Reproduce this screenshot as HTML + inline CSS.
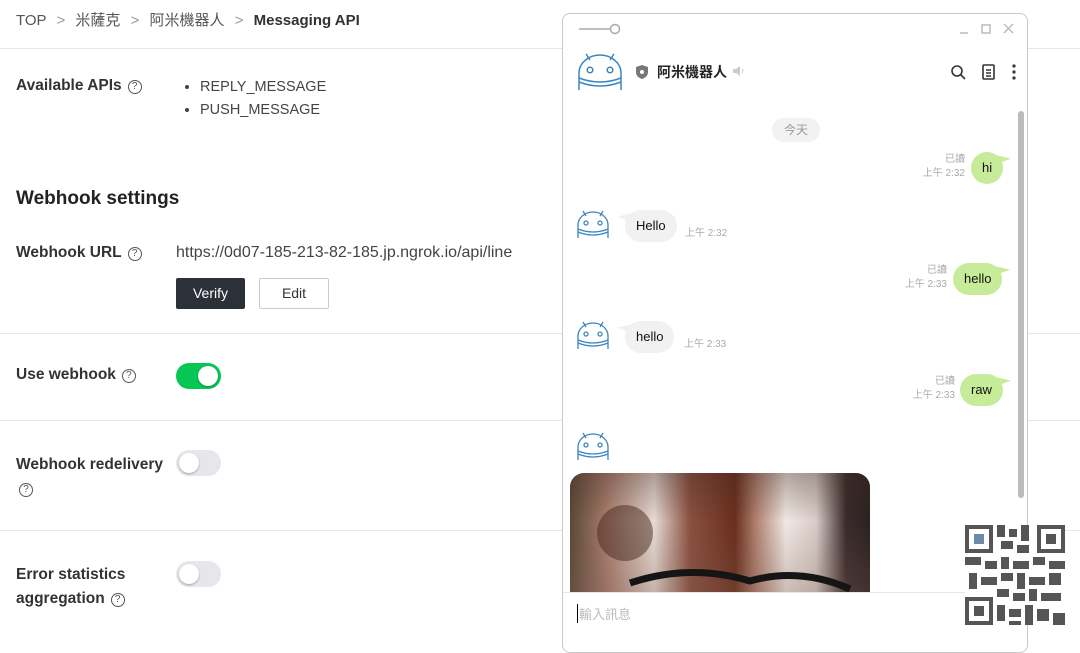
<!DOCTYPE html>
<html><head><meta charset="utf-8"><style>
*{box-sizing:border-box;margin:0;padding:0}
body{width:1080px;height:640px;overflow:hidden;background:#fff;font-family:"Liberation Sans","Noto Sans CJK TC",sans-serif;color:#111;position:relative}
.a{position:absolute}
.hr{position:absolute;left:0;width:1080px;height:1px;background:#e6e6e6}
.lbl{font-size:15.5px;font-weight:bold;color:#333}
.q{display:inline-block;width:14px;height:14px;border:1.3px solid #555;border-radius:50%;font-size:10px;text-align:center;line-height:12px;font-weight:normal;color:#555;vertical-align:1px;margin-left:6px}
.tog{position:absolute;width:45px;height:26px;border-radius:13px;background:#e5e7ea}
.tog i{position:absolute;top:3px;left:3px;width:20px;height:20px;border-radius:50%;background:#fff;box-shadow:0 1px 2px rgba(0,0,0,.3)}
.tog.on{background:#06c755}.tog.on i{left:22px}
.win{position:absolute;left:562px;top:13px;width:466px;height:640px;border:1px solid #c8c8c8;border-radius:8px;background:#fff;overflow:hidden}
.bub{position:absolute;height:32px;border-radius:16px;font-size:13px;line-height:32px;padding:0 11px;color:#111}
.me{background:#c6ec9a}.bot{background:#f1f1f1}
.me:after{content:"";position:absolute;right:-7px;top:1px;border-left:12px solid #c6ec9a;border-top:8px solid transparent;transform:rotate(-20deg)}
.bot:before{content:"";position:absolute;left:-7px;top:1px;border-right:12px solid #f1f1f1;border-top:8px solid transparent;transform:rotate(20deg)}
.t{position:absolute;font-size:10px;color:#aaa;text-align:right;line-height:14px}
</style></head><body>
<div class="a" style="left:16px;top:9px;font-size:15px;color:#555">TOP <span style="color:#999;margin:0 6px">&gt;</span> 米薩克 <span style="color:#999;margin:0 6px">&gt;</span> 阿米機器人 <span style="color:#999;margin:0 6px">&gt;</span> <b style="color:#333">Messaging API</b></div>
<div class="hr" style="top:48px"></div>
<div class="a lbl" style="left:16px;top:77px">Available APIs<span class="q">?</span></div>
<ul class="a" style="left:200px;top:76px;font-size:14.5px;color:#444;line-height:23px;padding-left:0">
<li style="margin-left:0">REPLY_MESSAGE</li><li>PUSH_MESSAGE</li></ul>
<div class="a" style="left:16px;top:188px;font-size:19px;font-weight:bold;color:#222">Webhook settings</div>
<div class="a lbl" style="left:16px;top:244px">Webhook URL<span class="q">?</span></div>
<div class="a" style="left:176px;top:244px;font-size:16px;color:#444">https://0d07-185-213-82-185.jp.ngrok.io/api/line</div>
<div class="a" style="left:176px;top:278px;width:69px;height:31px;background:#2c3038;color:#fff;font-size:14px;text-align:center;line-height:31px;border-radius:2px">Verify</div>
<div class="a" style="left:259px;top:278px;width:70px;height:31px;border:1px solid #ccc;color:#333;font-size:14px;text-align:center;line-height:29px;border-radius:2px">Edit</div>
<div class="hr" style="top:333px"></div>
<div class="a lbl" style="left:16px;top:366px">Use webhook<span class="q">?</span></div>
<div class="tog on" style="left:176px;top:363px"><i></i></div>
<div class="hr" style="top:420px"></div>
<div class="a lbl" style="left:16px;top:453px;line-height:24px">Webhook redelivery<br><span class="q" style="margin-left:3px">?</span></div>
<div class="tog" style="left:176px;top:450px"><i></i></div>
<div class="hr" style="top:530px"></div>
<div class="a lbl" style="left:16px;top:563px;line-height:24px">Error statistics<br>aggregation<span class="q">?</span></div>
<div class="tog" style="left:176px;top:561px"><i></i></div>

<div class="win">
<svg class="a" style="left:15px;top:8px" width="44" height="14"><line x1="1" y1="7" x2="32" y2="7" stroke="#aaa" stroke-width="1.5"/><circle cx="37" cy="7" r="4.5" fill="#fff" stroke="#aaa" stroke-width="1.5"/></svg>
<svg class="a" style="left:395px;top:8px" width="65" height="14" stroke="#bbb" stroke-width="1.5" fill="none"><line x1="2" y1="11" x2="10" y2="11"/><rect x="24" y="3" width="8" height="8"/><path d="M46 2l9 9M55 2l-9 9"/></svg>
<svg class="a" style="left:14px;top:37px" width="46" height="40" fill="none" stroke="#3a86c0" stroke-width="1.5"><path d="M2 39V22A21 18 0 0 1 44 22v17"/><path d="M2 27q21 8 42 0M2 31q21 8 42 0"/><circle cx="13" cy="19" r="2.8"/><circle cx="33" cy="19" r="2.8"/><path d="M9 3l4 6M37 3l-4 6"/></svg>
<svg class="a" style="left:72px;top:50px" width="14" height="16"><path d="M7 1l6 2v5c0 4-3 6-6 7-3-1-6-3-6-7V3z" fill="#777"/><circle cx="7" cy="8" r="2" fill="#fff"/></svg>
<div class="a" style="left:94px;top:48px;font-size:14px;font-weight:bold;color:#222">阿米機器人</div>
<svg class="a" style="left:169px;top:51px" width="14" height="12"><path d="M1 4h3l4-3v10l-4-3H1z" fill="#ccc"/><path d="M10 4q2 2 0 4" stroke="#ccc" fill="none"/></svg>
<svg class="a" style="left:386px;top:49px" width="70" height="18" fill="none" stroke="#333" stroke-width="1.6"><circle cx="8" cy="8" r="5"/><path d="M12 12l4 4"/><rect x="34" y="2" width="11" height="14" rx="1"/><path d="M37 7h5M37 10h5M37 13h5"/><circle cx="65" cy="3" r=".8" fill="#333"/><circle cx="65" cy="9" r=".8" fill="#333"/><circle cx="65" cy="15" r=".8" fill="#333"/></svg>
<div class="a" style="left:455px;top:97px;width:6px;height:387px;border-radius:3px;background:#bbb"></div>
<div class="a" style="left:209px;top:104px;width:48px;height:24px;border-radius:12px;background:#f2f2f2;font-size:12px;color:#999;text-align:center;line-height:24px">今天</div>

<div class="t" style="left:340px;top:139px;width:62px">已讀<br>上午 2:32</div>
<div class="bub me" style="left:408px;top:138px">hi</div>
<svg class="a" style="left:13px;top:195px" width="34" height="30" fill="none" stroke="#3a86c0" stroke-width="1.3"><path d="M2 29V16A15 13 0 0 1 32 16v13"/><path d="M2 20q15 6 30 0M2 23q15 6 30 0"/><circle cx="10" cy="14" r="2"/><circle cx="24" cy="14" r="2"/><path d="M7 2l3 5M27 2l-3 5"/></svg>
<div class="bub bot" style="left:62px;top:196px">Hello</div>
<div class="t" style="left:122px;top:213px;text-align:left">上午 2:32</div>

<div class="t" style="left:320px;top:250px;width:64px">已讀<br>上午 2:33</div>
<div class="bub me" style="left:390px;top:249px">hello</div>
<svg class="a" style="left:13px;top:306px" width="34" height="30" fill="none" stroke="#3a86c0" stroke-width="1.3"><path d="M2 29V16A15 13 0 0 1 32 16v13"/><path d="M2 20q15 6 30 0M2 23q15 6 30 0"/><circle cx="10" cy="14" r="2"/><circle cx="24" cy="14" r="2"/><path d="M7 2l3 5M27 2l-3 5"/></svg>
<div class="bub bot" style="left:62px;top:307px">hello</div>
<div class="t" style="left:121px;top:324px;text-align:left">上午 2:33</div>

<div class="t" style="left:330px;top:361px;width:62px">已讀<br>上午 2:33</div>
<div class="bub me" style="left:397px;top:360px">raw</div>
<svg class="a" style="left:13px;top:417px" width="34" height="30" fill="none" stroke="#3a86c0" stroke-width="1.3"><path d="M2 29V16A15 13 0 0 1 32 16v13"/><path d="M2 20q15 6 30 0M2 23q15 6 30 0"/><circle cx="10" cy="14" r="2"/><circle cx="24" cy="14" r="2"/><path d="M7 2l3 5M27 2l-3 5"/></svg>

<div class="a" style="left:7px;top:459px;width:300px;height:120px;border-radius:14px 14px 0 0;overflow:hidden;background:linear-gradient(90deg,#5a4838 0%,#a87c6c 12%,#e8dcd6 28%,#8a5040 40%,#6a2e1c 55%,#b08070 62%,#f0e8e4 72%,#d8ccc8 82%,#3a2a2a 92%,#2a2222 100%)">
<div class="a" style="left:0;top:0;width:300px;height:120px;background:linear-gradient(180deg,rgba(60,40,30,.35),rgba(0,0,0,0) 40%,rgba(120,90,80,.3))"></div>
<svg class="a" style="left:0;top:0" width="300" height="120"><path d="M60 110q60-20 120-2q50-14 100 8" stroke="#151515" stroke-width="7" fill="none"/><circle cx="55" cy="60" r="28" fill="rgba(70,40,30,.5)"/></svg>
</div>
<div class="a" style="left:0;top:578px;width:466px;height:1px;background:#e6e6e6"></div>
<div class="a" style="left:14px;top:590px;font-size:13px;color:#bbb;border-left:1px solid #000;padding-left:1px">輸入訊息</div>
</div>

<svg class="a" style="left:965px;top:525px" width="100" height="100" shape-rendering="crispEdges">
<rect width="100" height="100" fill="#fff"/>
<g fill="#555">
<rect x="0" y="0" width="28" height="28"/><rect x="72" y="0" width="28" height="28"/><rect x="0" y="72" width="28" height="28"/>
</g>
<g fill="#fff"><rect x="4" y="4" width="20" height="20"/><rect x="76" y="4" width="20" height="20"/><rect x="4" y="76" width="20" height="20"/></g>
<g fill="#555"><rect x="9" y="9" width="10" height="10" fill="#6a8aa8"/><rect x="81" y="9" width="10" height="10"/><rect x="9" y="81" width="10" height="10"/>
<rect x="32" y="0" width="8" height="12"/><rect x="44" y="4" width="8" height="8"/><rect x="56" y="0" width="8" height="16"/><rect x="36" y="16" width="12" height="8"/><rect x="52" y="20" width="12" height="8"/>
<rect x="0" y="32" width="16" height="8"/><rect x="20" y="36" width="12" height="8"/><rect x="36" y="32" width="8" height="12"/><rect x="48" y="36" width="16" height="8"/><rect x="68" y="32" width="12" height="8"/><rect x="84" y="36" width="16" height="8"/>
<rect x="4" y="48" width="8" height="16"/><rect x="16" y="52" width="16" height="8"/><rect x="36" y="48" width="12" height="8"/><rect x="52" y="48" width="8" height="16"/><rect x="64" y="52" width="16" height="8"/><rect x="84" y="48" width="12" height="12"/>
<rect x="32" y="64" width="12" height="8"/><rect x="48" y="68" width="12" height="8"/><rect x="64" y="64" width="8" height="12"/><rect x="76" y="68" width="20" height="8"/>
<rect x="32" y="80" width="8" height="16"/><rect x="44" y="84" width="12" height="8"/><rect x="60" y="80" width="8" height="20"/><rect x="72" y="84" width="12" height="12"/><rect x="88" y="88" width="12" height="12"/><rect x="44" y="96" width="12" height="4"/>
</g></svg>
</body></html>
